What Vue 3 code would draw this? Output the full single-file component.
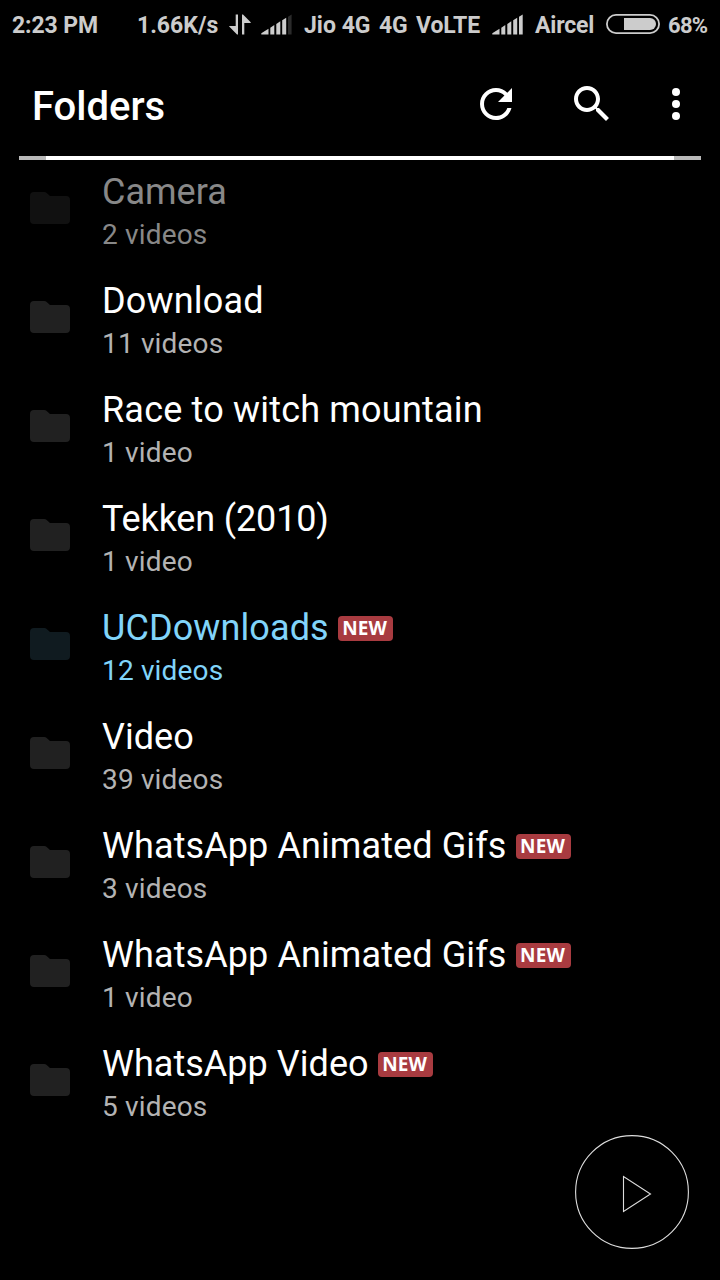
<script setup>
const folders = [
  { name: 'Camera', count: '2 videos', dim: true },
  { name: 'Download', count: '11 videos', wide: true },
  { name: 'Race to witch mountain', count: '1 video', wide: true },
  { name: 'Tekken (2010)', count: '1 video', tight: true },
  { name: 'UCDownloads', count: '12 videos', active: true, fresh: true },
  { name: 'Video', count: '39 videos', plain: true },
  { name: 'WhatsApp Animated Gifs', count: '3 videos', fresh: true },
  { name: 'WhatsApp Animated Gifs', count: '1 video', fresh: true },
  { name: 'WhatsApp Video', count: '5 videos', fresh: true, plain: true },
]
</script>

<template>
  <div class="screen">
    <header class="status">
      <span class="clock">2:23 PM</span>
      <span class="speed">1.66K/s</span>
      <svg class="arrows" width="23" height="21" viewBox="0 0 23 21">
        <path d="M7.7 0.4H10V20.6H9L1.2 12.6V12H7.7Z M14 0.4H15L22.7 8.3V9H16.3V20.6H14Z" />
      </svg>
      <svg class="signal first" width="31" height="21" viewBox="0 0 31 21">
        <path d="M0.3 20.6V19.2L7.5 14.8V20.6Z M9.3 20.6V13.7L13.3 11V20.6Z M15.3 20.6V10L19.3 7.3V20.6Z M21.2 20.6V6.3L25.2 3.8V20.6Z" />
        <path class="off" d="M27 20.6V2.7L30.6 0.4V20.6Z" />
      </svg>
      <span class="carrier">Jio 4G</span>
      <span class="net">4G</span>
      <span class="volte">VoLTE</span>
      <svg class="signal second" width="31" height="21" viewBox="0 0 31 21">
        <path d="M0.3 20.6V19.2L7.5 14.8V20.6Z M9.3 20.6V13.7L13.3 11V20.6Z M15.3 20.6V10L19.3 7.3V20.6Z M21.2 20.6V6.3L25.2 3.8V20.6Z M27 20.6V2.7L30.7 0.4V20.6Z" />
      </svg>
      <span class="aircel">Aircel</span>
      <svg class="battery" width="54" height="20" viewBox="0 0 54 20">
        <rect class="shell" x="0.9" y="0.9" width="52.2" height="18.2" rx="9.1" />
        <path d="M18 4H44A6 6 0 0 1 44 16H18Z" />
      </svg>
      <span class="percent">68%</span>
    </header>

    <div class="toolbar">
      <h1>Folders</h1>
      <svg class="refresh" width="48" height="48" viewBox="0 0 24 24">
        <path d="M17.65 6.35C16.2 4.9 14.21 4 12 4c-4.42 0-7.99 3.58-7.99 8s3.57 8 7.99 8c3.73 0 6.84-2.55 7.73-6h-2.08c-.82 2.33-3.04 4-5.65 4-3.31 0-6-2.69-6-6s2.69-6 6-6c1.66 0 3.14.69 4.22 1.78L13 11h7V4l-2.35 2.35z" />
      </svg>
      <svg class="search" width="48" height="48" viewBox="0 0 24 24">
        <path d="M15.5 14h-.79l-.28-.27C15.41 12.59 16 11.11 16 9.5 16 5.91 13.09 3 9.5 3S3 5.91 3 9.5 5.91 16 9.5 16c1.61 0 3.09-.59 4.23-1.57l.27.28v.79l5 4.99L20.49 19l-4.99-5zm-6 0C7.01 14 5 11.99 5 9.5S7.01 5 9.5 5 14 7.01 14 9.5 11.99 14 9.5 14z" />
      </svg>
      <svg class="more" width="8" height="32" viewBox="0 0 8 32">
        <circle cx="4" cy="4" r="4" /><circle cx="4" cy="16" r="4" /><circle cx="4" cy="28" r="4" />
      </svg>
    </div>
    <div class="progress"><div class="bar"></div></div>

    <ul class="list">
      <li
        v-for="(f, i) in folders"
        :key="i"
        :class="{ dim: f.dim, active: f.active, wide: f.wide, tight: f.tight, plain: f.plain }"
      >
        <svg class="folder" width="40" height="32" viewBox="0 0 40 32">
          <path d="M4 0H14.4Q15.6 0 16.4 0.8L20 4H36A4 4 0 0 1 40 8V28A4 4 0 0 1 36 32H4A4 4 0 0 1 0 28V4A4 4 0 0 1 4 0Z" />
        </svg>
        <div class="info">
          <div class="title">
            <span class="name">{{ f.name }}</span>
            <span v-if="f.fresh" class="badge"><span>NEW</span></span>
          </div>
          <div class="count">{{ f.count }}</div>
        </div>
      </li>
    </ul>

    <button class="play" aria-label="Play">
      <svg width="114" height="114" viewBox="0 0 114 114">
        <circle cx="57" cy="57" r="56.4" />
        <path d="M48.5 41.5V76.5L75.5 59Z" />
      </svg>
    </button>
  </div>
</template>

<style>
body { background: #000; }
</style>

<style scoped>
.screen {
  position: relative;
  width: 720px;
  height: 1280px;
  overflow: hidden;
  background: #000;
  color: #fff;
  font-family: Roboto, "Liberation Sans", sans-serif;
}
.status {
  display: flex;
  align-items: flex-start;
  height: 50px;
  padding-left: 12px;
  box-sizing: border-box;
  color: #ccc;
  fill: #ccc;
  font-size: 23px;
  font-weight: 700;
  line-height: 27px;
  letter-spacing: -0.1px;
  white-space: nowrap;
}
.status span { flex: none; margin-top: 12px; }
.status svg { flex: none; margin-top: 14px; }
.clock { width: 125px; }
.speed { width: 91px; letter-spacing: 0; }
.arrows { margin-right: 10px; }
.signal.first { margin-right: 12px; }
.off { fill: #2b2b2b; }
.carrier { width: 75px; letter-spacing: 0; }
.net { width: 37px; }
.volte { width: 76px; }
.signal.second { margin-right: 12px; }
.aircel { width: 71px; letter-spacing: -0.2px; }
.battery { margin-right: 8px; }
.percent { font-size: 22px; letter-spacing: -0.7px; }
.shell { fill: none; stroke: #ccc; stroke-width: 1.8; }

.toolbar {
  display: flex;
  height: 106px;
  padding-left: 32px;
}
h1 {
  width: 440px;
  margin: 33px 0 0;
  font-size: 40px;
  font-weight: 500;
  line-height: 47px;
}
.toolbar svg { flex: none; fill: #fff; }
.refresh { margin: 30px 48px 0 0; }
.search { margin: 30px 56px 0 0; }
.more { margin-top: 38px; }

.progress {
  height: 4px;
  margin: 0 19px;
  padding: 0 27px;
  background: #b9b9b9;
}
.bar { height: 4px; background: #fff; }

.list { margin: 0; padding: 0; list-style: none; }
li {
  display: flex;
  height: 109px;
  padding-left: 30px;
}
.folder { flex: none; margin: 32px 32px 0 0; fill: #212121; }
.info { padding-top: 11px; white-space: nowrap; }
.title {
  display: flex;
  height: 47px;
  font-size: 36px;
  line-height: 42px;
  letter-spacing: 0.1px;
}
.wide .title { letter-spacing: 0.19px; }
.tight .title { letter-spacing: -0.15px; }
.plain .title { letter-spacing: 0.03px; }
.count {
  color: #b3b3b3;
  font-size: 28px;
  line-height: 33px;
  letter-spacing: 0.16px;
}
.dim .folder { fill: #111; }
.dim .title { color: #888; letter-spacing: 0; }
.dim .count { color: #888; }
.active .title, .active .count { color: #81d4fa; }
.active .folder { fill: #101b20; }
.badge {
  display: flex;
  align-items: center;
  justify-content: center;
  width: 55px;
  height: 25px;
  box-sizing: border-box;
  margin: 9px 0 0 9px;
  padding-right: 1px;
  border-radius: 4px;
  background: #a83b40;
  color: #fff;
  font-family: "Open Sans", sans-serif;
  font-size: 19px;
  font-weight: 700;
  line-height: 25px;
}
.play {
  position: absolute;
  left: 575px;
  top: 1135px;
  width: 114px;
  height: 114px;
  padding: 0;
  border: 0;
  background: none;
}
.play svg { display: block; fill: none; stroke: #ddd; stroke-width: 1.1; }
</style>
